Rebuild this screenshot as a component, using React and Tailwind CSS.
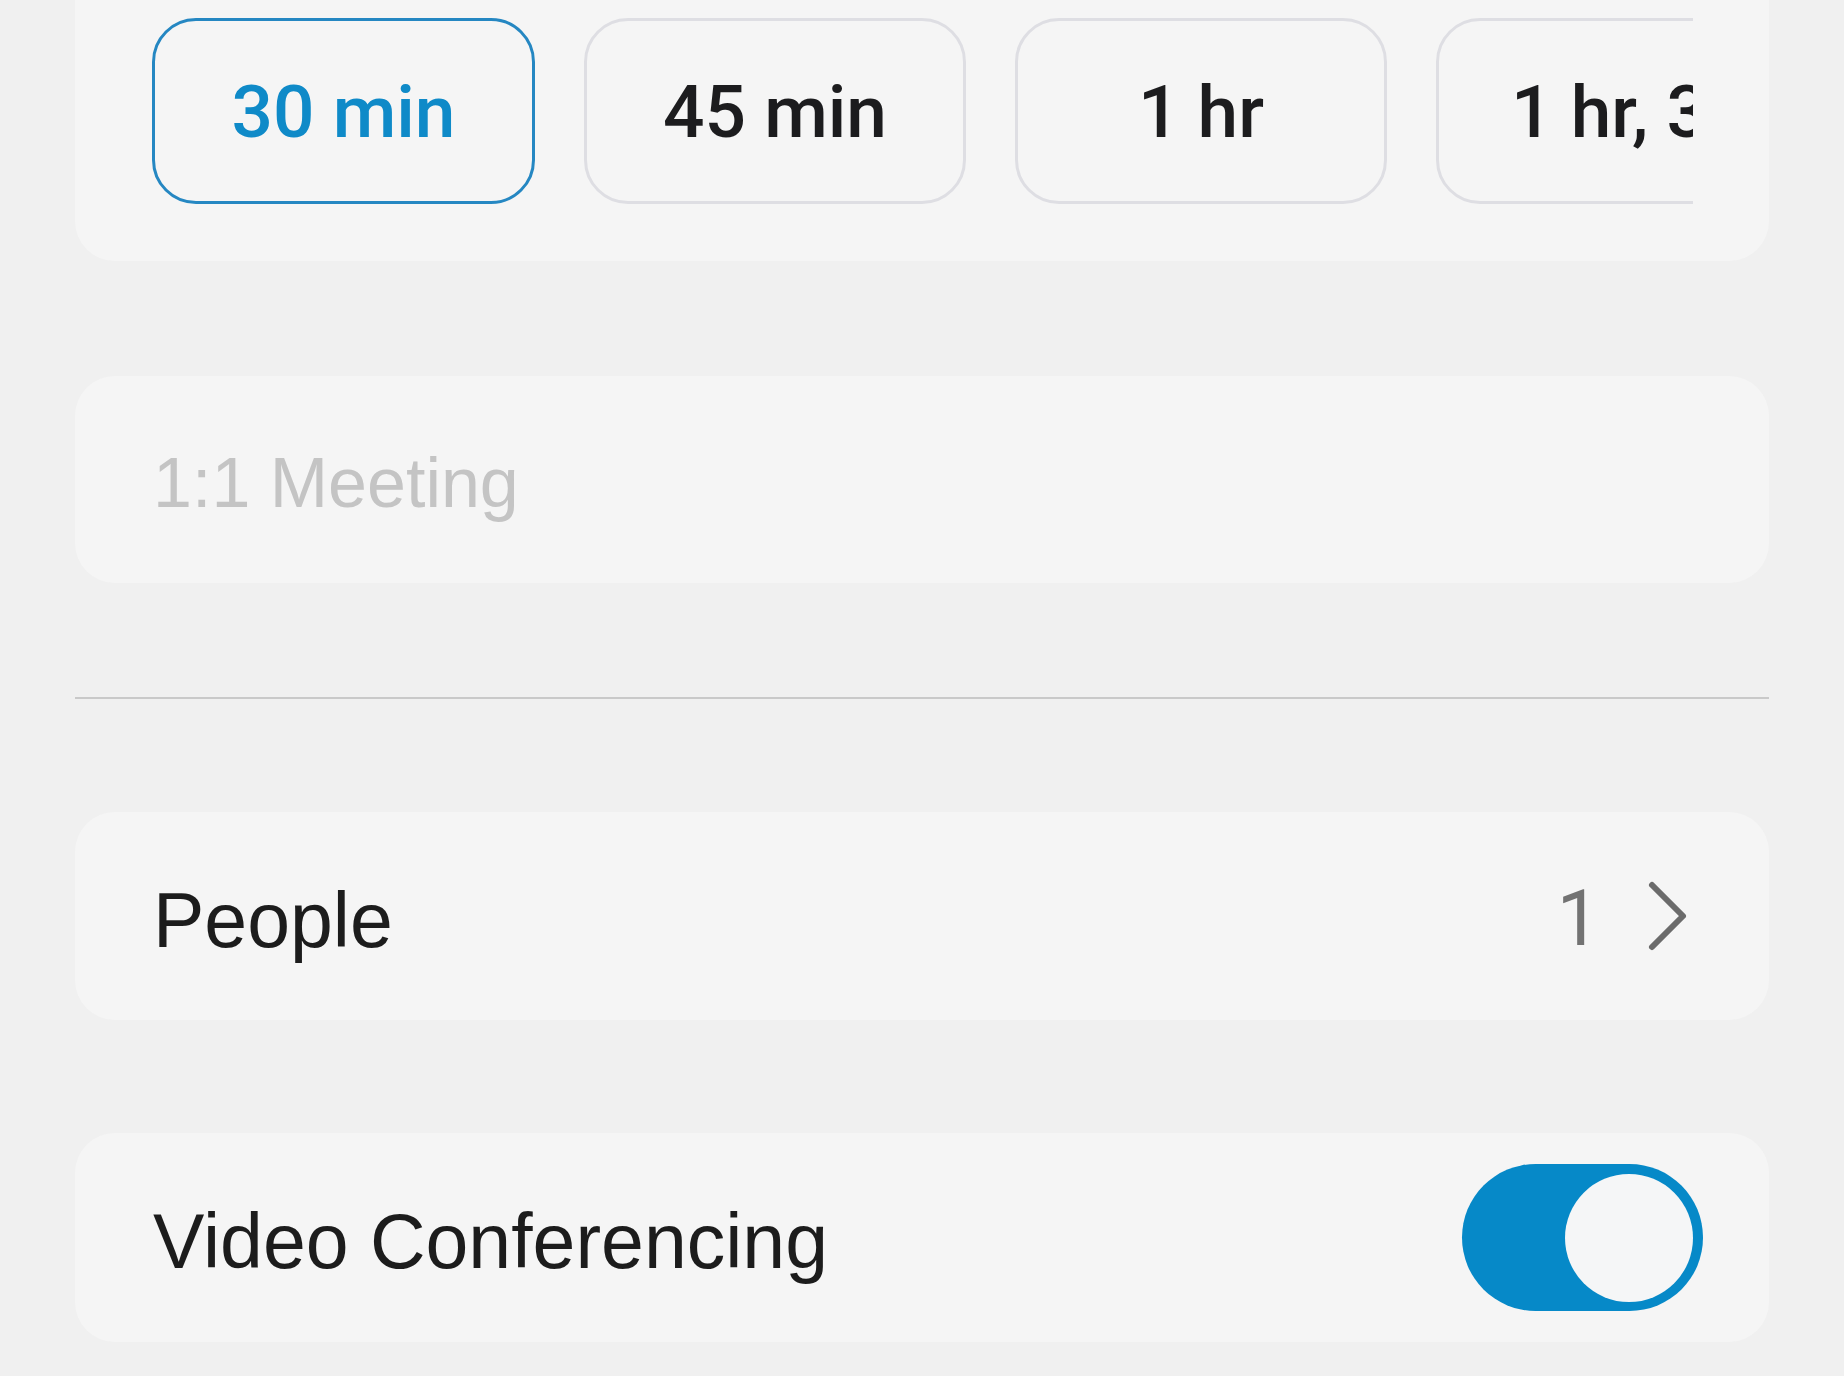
import React from "react";

function Chip({ label, selected, className }) {
  return (
    <div
      className={
        "shrink-0 h-[186px] rounded-[44px] border-[3px] flex items-center justify-center " +
        (selected
          ? "border-[#2587c2] text-[#0f8ac8] "
          : "border-[#dedee3] text-[#1c1c1e] ") +
        className
      }
    >
      <span className="font-['Roboto','Liberation_Sans',sans-serif] text-[73px] leading-none font-medium whitespace-nowrap pt-[2px]">
        {label}
      </span>
    </div>
  );
}

export default function App() {
  return (
    <div className="min-h-screen w-full bg-[#f0f0f0] px-[75px] font-['Liberation_Sans',Arial,sans-serif]">
      {/* Duration chips card */}
      <div className="rounded-b-[40px] bg-[#f5f5f5] pt-[18px] pb-[57px] pl-[77px] pr-[76px]">
        <div className="flex gap-[49px] overflow-hidden">
          <Chip label="30 min" selected className="w-[383px]" />
          <Chip label="45 min" className="w-[382px]" />
          <Chip label="1 hr" className="w-[372px]" />
          <Chip label="1 hr, 30 min" className="px-[72px]" />
        </div>
      </div>

      {/* Meeting title field */}
      <div className="mt-[115px] h-[207px] rounded-[40px] bg-[#f5f5f5] px-[78px] flex items-center">
        <span className="text-[70px] leading-none text-[#c4c4c4] pt-[6px]">1:1 Meeting</span>
      </div>

      {/* Divider */}
      <div className="mt-[114px] h-[2px] bg-[#c9c9c9]" />

      {/* People row */}
      <div className="mt-[113px] h-[208px] rounded-[40px] bg-[#f5f5f5] pl-[78px] pr-[79px] flex items-center justify-between">
        <span className="text-[77px] leading-none text-[#1c1c1c] pt-[8px]">People</span>
        <div className="flex items-center gap-[46px]">
          <span className="font-['Roboto','Liberation_Sans',sans-serif] text-[77px] leading-none text-[#727272] pt-[6px]">1</span>
          <svg width="44" height="76" viewBox="0 0 44 76" fill="none">
            <path
              d="M6 7 L37 38 L6 69"
              stroke="#6b6b6b"
              strokeWidth="6"
              strokeLinecap="round"
              strokeLinejoin="round"
            />
          </svg>
        </div>
      </div>

      {/* Video Conferencing row */}
      <div className="mt-[113px] h-[209px] rounded-[40px] bg-[#f5f5f5] pl-[78px] pr-[66px] flex items-center justify-between">
        <span className="text-[77px] leading-none text-[#1c1c1c] pt-[8px]">Video Conferencing</span>
        <div className="w-[241px] h-[147px] rounded-full bg-[#0689c8] flex items-center justify-end pr-[10px]">
          <div className="w-[128px] h-[128px] rounded-full bg-[#f5f6f7]" />
        </div>
      </div>
    </div>
  );
}
